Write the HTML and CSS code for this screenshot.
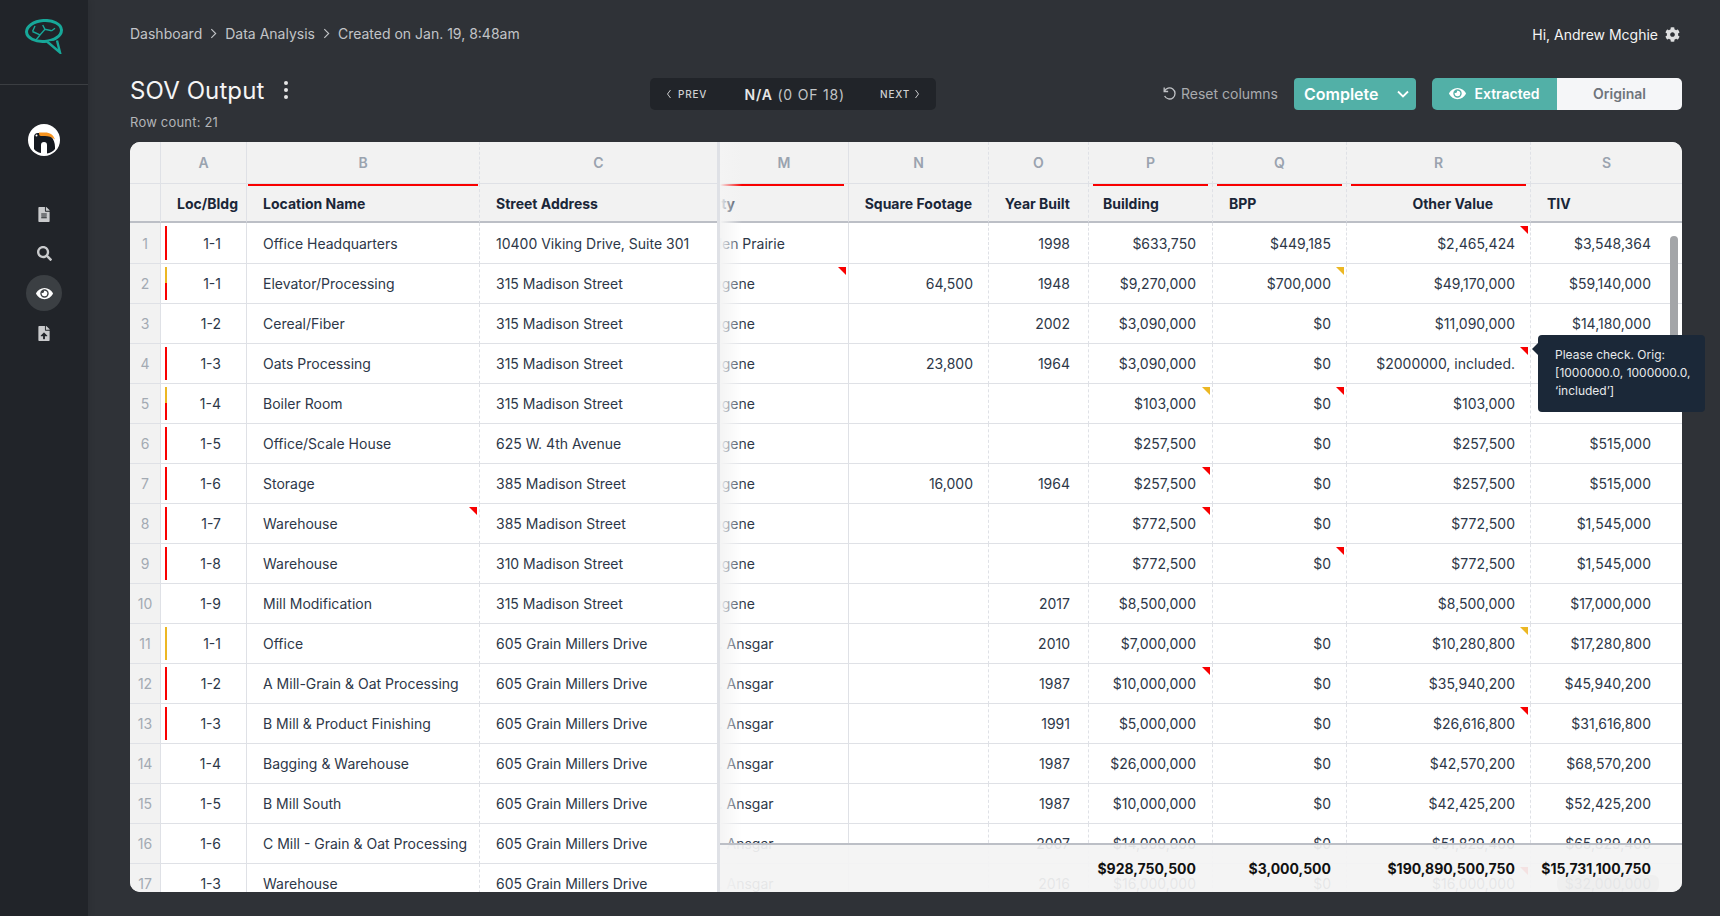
FILE: index.html
```html
<!DOCTYPE html>
<html lang="en">
<head>
<meta charset="utf-8">
<title>SOV Output</title>
<link rel="stylesheet" href="styles.css">
</head>
<body>
<aside class="sidebar">
  <div class="brand">
    <svg class="brand-logo" viewBox="0 0 39 35" fill="none" stroke="#17a899" aria-label="logo">
      <ellipse cx="19" cy="12" rx="17.500" ry="10.500" transform="rotate(-4 19 12)" stroke-width="3"/>
      <path d="M22 22.500L35 33.500 32 21.500" stroke-width="2.400" fill="#212429"/>
      <path d="M7.500 12.500L15 16l5-5.700 6.700 1.400M15 16l-4 5M20 10.300L17.700 6M26.700 11.700L30 9.300M7.500 12.500L10 7" stroke-width="1.400"/>
    </svg>
  </div>
  <nav class="side-nav">
    <svg class="toucan" viewBox="0 0 32 32" aria-label="account">
      <circle cx="16" cy="16" r="16" fill="#fff"/>
      <path d="M6 25V13c0-2.500 1.500-4 4-4h4c8 0 13 6 13 14v2c-2 2.500-5 4-8 4.500V21c0-2-1-3-3-3s-3 1-3 3v8c-3-.5-5.500-2-7-4z" fill="#14181f"/>
      <path d="M11 8.500h6c5 0 8.500 2.500 10 7-3-2.500-7-3.500-10-3.500h-4c-1.500 0-2-1-2-3.500z" fill="#f7931e"/>
      <circle cx="8.500" cy="11.500" r="1" fill="#fff"/>
    </svg>
    <svg class="side-icon icon-doc" viewBox="0 0 384 512"><path d="M224 136V0H24C10.700 0 0 10.700 0 24v464c0 13.300 10.700 24 24 24h336c13.300 0 24-10.700 24-24V160H248c-13.200 0-24-10.800-24-24zm64 236c0 6.600-5.400 12-12 12H108c-6.600 0-12-5.400-12-12v-8c0-6.600 5.400-12 12-12h168c6.600 0 12 5.400 12 12v8zm0-64c0 6.600-5.400 12-12 12H108c-6.600 0-12-5.400-12-12v-8c0-6.600 5.400-12 12-12h168c6.600 0 12 5.400 12 12v8zm0-72v8c0 6.600-5.400 12-12 12H108c-6.600 0-12-5.400-12-12v-8c0-6.600 5.400-12 12-12h168c6.600 0 12 5.400 12 12zm96-114.100v6.100H256V0h6.100c6.400 0 12.500 2.500 17 7l97.900 98c4.500 4.500 7 10.600 7 16.900z"/></svg>
    <svg class="side-icon icon-search" viewBox="0 0 512 512"><path d="M505 442.700L405.300 343c-4.500-4.500-10.600-7-17-7H372c27.600-35.300 44-79.700 44-128C416 93.100 322.900 0 208 0S0 93.100 0 208s93.100 208 208 208c48.300 0 92.700-16.400 128-44v16.300c0 6.400 2.500 12.500 7 17l99.700 99.700c9.400 9.400 24.600 9.400 33.900 0l28.300-28.300c9.400-9.400 9.400-24.600.1-34zM208 336c-70.700 0-128-57.200-128-128 0-70.700 57.200-128 128-128 70.700 0 128 57.200 128 128 0 70.700-57.200 128-128 128z"/></svg>
    <div class="side-active">
      <svg class="side-eye" viewBox="0 0 576 512"><path d="M572.520 241.400C518.290 135.590 410.930 64 288 64S57.680 135.640 3.480 241.410a32.350 32.350 0 0 0 0 29.190C57.710 376.410 165.070 448 288 448s230.320-71.640 284.520-177.410a32.350 32.350 0 0 0 0-29.190zM288 400a144 144 0 1 1 144-144 143.930 143.930 0 0 1-144 144zm0-240a95.310 95.310 0 0 0-25.310 3.790 47.850 47.850 0 0 1-66.900 66.900A95.780 95.780 0 1 0 288 160z"/></svg>
    </div>
    <svg class="side-icon icon-upload" viewBox="0 0 384 512"><path d="M224 136V0H24C10.700 0 0 10.700 0 24v464c0 13.300 10.700 24 24 24h336c13.300 0 24-10.700 24-24V160H248c-13.200 0-24-10.800-24-24zm65.180 216.010H224v80c0 8.840-7.160 16-16 16h-32c-8.840 0-16-7.160-16-16v-80H94.820c-14.280 0-21.410-17.290-11.270-27.360l96.420-95.700c6.650-6.610 17.390-6.610 24.040 0l96.420 95.700c10.150 10.070 3.030 27.360-11.250 27.360zM377 105L279.100 7c-4.500-4.500-10.600-7-17-7H256v128h128v-6.100c0-6.300-2.500-12.400-7-16.900z"/></svg>
  </nav>
</aside>

<main class="main">
  <header class="topbar">
    <nav class="crumbs">
      <span>Dashboard</span>
      <svg class="crumb-sep" viewBox="0 0 8 12"><path d="M1.500 1l5 5-5 5"/></svg>
      <span>Data Analysis</span>
      <svg class="crumb-sep" viewBox="0 0 8 12"><path d="M1.500 1l5 5-5 5"/></svg>
      <span>Created on Jan. 19, 8:48am</span>
    </nav>
    <div class="user">
      <span>Hi, Andrew Mcghie</span>
      <svg class="gear" viewBox="0 0 512 512"><path d="M487.400 315.700l-42.600-24.600c4.300-23.200 4.300-47 0-70.200l42.600-24.600c4.900-2.800 7.100-8.600 5.500-14-11.100-35.600-30-67.800-54.700-94.600-3.800-4.100-10-5.100-14.800-2.300L380.800 110c-17.900-15.400-38.500-27.300-60.800-35.100V25.800c0-5.600-3.900-10.500-9.400-11.700-36.700-8.200-74.300-7.800-109.200 0-5.500 1.200-9.400 6.100-9.400 11.700V75c-22.200 7.900-42.800 19.800-60.800 35.100L88.700 85.500c-4.900-2.800-11-1.900-14.800 2.300-24.700 26.700-43.600 58.900-54.700 94.600-1.700 5.400.6 11.200 5.500 14L67.300 221c-4.300 23.200-4.300 47 0 70.200l-42.600 24.600c-4.900 2.800-7.100 8.600-5.500 14 11.100 35.600 30 67.800 54.700 94.600 3.800 4.100 10 5.100 14.800 2.300l42.600-24.600c17.900 15.400 38.500 27.300 60.800 35.100v49.200c0 5.600 3.900 10.500 9.400 11.700 36.700 8.200 74.300 7.800 109.200 0 5.500-1.200 9.400-6.100 9.400-11.700v-49.200c22.200-7.900 42.800-19.800 60.800-35.100l42.600 24.600c4.900 2.800 11 1.900 14.800-2.300 24.700-26.700 43.600-58.900 54.700-94.600 1.500-5.500-.7-11.300-5.600-14.100zM256 336c-44.100 0-80-35.900-80-80s35.900-80 80-80 80 35.900 80 80-35.900 80-80 80z"/></svg>
    </div>
  </header>

  <section class="toolbar">
    <div class="title-block">
      <div class="title-line">
        <h1 class="title">SOV Output</h1>
        <span class="kebab"><i></i><i></i><i></i></span>
      </div>
      <div class="row-count">Row count: 21</div>
    </div>
    <div class="pager">
      <span class="pager-btn"><svg class="pager-chev" viewBox="0 0 6 10"><path d="M4.500 1l-3 4 3 4"/></svg>PREV</span>
      <span class="pager-label"><b>N/A</b> (0 OF 18)</span>
      <span class="pager-btn pager-next">NEXT<svg class="pager-chev" viewBox="0 0 6 10"><path d="M1.500 1l3 4-3 4"/></svg></span>
    </div>
    <div class="controls">
      <span class="reset">
        <svg class="reset-icon" viewBox="0 0 16 16"><path d="M2.500 1.800v4.500H7"/><path d="M2.800 6A6.300 6.300 0 1 1 3 11.500"/></svg>
        Reset columns
      </span>
      <span class="complete">Complete<svg class="complete-chev" viewBox="0 0 12 8"><path d="M1 1.500L6 6.500l5-5"/></svg></span>
      <div class="toggle">
        <span class="toggle-on"><svg class="toggle-eye" viewBox="0 0 576 512"><path d="M572.520 241.400C518.290 135.590 410.930 64 288 64S57.680 135.640 3.480 241.410a32.350 32.350 0 0 0 0 29.190C57.710 376.410 165.070 448 288 448s230.320-71.640 284.520-177.410a32.350 32.350 0 0 0 0-29.190zM288 400a144 144 0 1 1 144-144 143.930 143.930 0 0 1-144 144zm0-240a95.310 95.310 0 0 0-25.310 3.790 47.850 47.850 0 0 1-66.900 66.900A95.780 95.780 0 1 0 288 160z"/></svg>Extracted</span>
        <span class="toggle-off">Original</span>
      </div>
    </div>
  </section>

  <section class="sheet">
    <div class="frozen">
      <table class="grid grid-left">
        <colgroup><col class="w-num"><col class="w-a"><col class="w-b"><col class="w-c"></colgroup>
        <thead>
          <tr class="letters"><th></th><th>A</th><th>B</th><th>C</th></tr>
          <tr class="names"><th></th><th class="r tight">Loc/Bldg</th><th class="l flagged narrow">Location Name</th><th class="l">Street Address</th></tr>
        </thead>
        <tbody>
          <tr><td class="num">1</td><td class="loc"><i class="mark red"></i>1-1</td><td>Office Headquarters</td><td>10400 Viking Drive, Suite 301</td></tr>
          <tr><td class="num">2</td><td class="loc"><i class="mark both"></i>1-1</td><td>Elevator/Processing</td><td>315 Madison Street</td></tr>
          <tr><td class="num">3</td><td class="loc">1-2</td><td>Cereal/Fiber</td><td>315 Madison Street</td></tr>
          <tr><td class="num">4</td><td class="loc"><i class="mark red"></i>1-3</td><td>Oats Processing</td><td>315 Madison Street</td></tr>
          <tr><td class="num">5</td><td class="loc"><i class="mark both"></i>1-4</td><td>Boiler Room</td><td>315 Madison Street</td></tr>
          <tr><td class="num">6</td><td class="loc"><i class="mark red"></i>1-5</td><td>Office/Scale House</td><td>625 W. 4th Avenue</td></tr>
          <tr><td class="num">7</td><td class="loc"><i class="mark red"></i>1-6</td><td>Storage</td><td>385 Madison Street</td></tr>
          <tr><td class="num">8</td><td class="loc"><i class="mark red"></i>1-7</td><td class="tri-r">Warehouse</td><td>385 Madison Street</td></tr>
          <tr><td class="num">9</td><td class="loc"><i class="mark red"></i>1-8</td><td>Warehouse</td><td>310 Madison Street</td></tr>
          <tr><td class="num">10</td><td class="loc">1-9</td><td>Mill Modification</td><td>315 Madison Street</td></tr>
          <tr><td class="num">11</td><td class="loc"><i class="mark yellow"></i>1-1</td><td>Office</td><td>605 Grain Millers Drive</td></tr>
          <tr><td class="num">12</td><td class="loc"><i class="mark red"></i>1-2</td><td>A Mill-Grain &amp; Oat Processing</td><td>605 Grain Millers Drive</td></tr>
          <tr><td class="num">13</td><td class="loc"><i class="mark red"></i>1-3</td><td>B Mill &amp; Product Finishing</td><td>605 Grain Millers Drive</td></tr>
          <tr><td class="num">14</td><td class="loc">1-4</td><td>Bagging &amp; Warehouse</td><td>605 Grain Millers Drive</td></tr>
          <tr><td class="num">15</td><td class="loc">1-5</td><td>B Mill South</td><td>605 Grain Millers Drive</td></tr>
          <tr><td class="num">16</td><td class="loc">1-6</td><td>C Mill - Grain &amp; Oat Processing</td><td>605 Grain Millers Drive</td></tr>
          <tr><td class="num">17</td><td class="loc">1-3</td><td>Warehouse</td><td>605 Grain Millers Drive</td></tr>
        </tbody>
      </table>
    </div>
    <div class="scroller">
      <table class="grid grid-right">
        <colgroup><col class="w-m"><col class="w-n"><col class="w-o"><col class="w-p"><col class="w-q"><col class="w-r"><col class="w-s"></colgroup>
        <thead>
          <tr class="letters"><th class="letter-m">M</th><th>N</th><th>O</th><th>P</th><th>Q</th><th>R</th><th>S</th></tr>
          <tr class="names"><th class="l flagged city">City</th><th class="r">Square Footage</th><th class="r year">Year Built</th><th class="l flagged snug">Building</th><th class="l flagged">BPP</th><th class="r flagged wide-pad">Other Value</th><th class="l">TIV</th></tr>
        </thead>
        <tbody>
          <tr><td>Eden Prairie</td><td></td><td>1998</td><td>$633,750</td><td>$449,185</td><td class="tri-r">$2,465,424</td><td>$3,548,364</td></tr>
          <tr><td class="tri-r">Eugene</td><td>64,500</td><td>1948</td><td>$9,270,000</td><td class="tri-y">$700,000</td><td>$49,170,000</td><td>$59,140,000</td></tr>
          <tr><td>Eugene</td><td></td><td>2002</td><td>$3,090,000</td><td>$0</td><td>$11,090,000</td><td>$14,180,000</td></tr>
          <tr><td>Eugene</td><td>23,800</td><td>1964</td><td>$3,090,000</td><td>$0</td><td class="tri-r">$2000000, included.</td><td></td></tr>
          <tr><td>Eugene</td><td></td><td></td><td class="tri-y">$103,000</td><td class="tri-r">$0</td><td>$103,000</td><td></td></tr>
          <tr><td>Eugene</td><td></td><td></td><td>$257,500</td><td>$0</td><td>$257,500</td><td>$515,000</td></tr>
          <tr><td>Eugene</td><td>16,000</td><td>1964</td><td class="tri-r">$257,500</td><td>$0</td><td>$257,500</td><td>$515,000</td></tr>
          <tr><td>Eugene</td><td></td><td></td><td class="tri-r">$772,500</td><td>$0</td><td>$772,500</td><td>$1,545,000</td></tr>
          <tr><td>Eugene</td><td></td><td></td><td>$772,500</td><td class="tri-r">$0</td><td>$772,500</td><td>$1,545,000</td></tr>
          <tr><td>Eugene</td><td></td><td>2017</td><td>$8,500,000</td><td></td><td>$8,500,000</td><td>$17,000,000</td></tr>
          <tr><td>St. Ansgar</td><td></td><td>2010</td><td>$7,000,000</td><td>$0</td><td class="tri-y">$10,280,800</td><td>$17,280,800</td></tr>
          <tr><td>St. Ansgar</td><td></td><td>1987</td><td class="tri-r">$10,000,000</td><td>$0</td><td>$35,940,200</td><td>$45,940,200</td></tr>
          <tr><td>St. Ansgar</td><td></td><td>1991</td><td>$5,000,000</td><td>$0</td><td class="tri-r">$26,616,800</td><td>$31,616,800</td></tr>
          <tr><td>St. Ansgar</td><td></td><td>1987</td><td>$26,000,000</td><td>$0</td><td>$42,570,200</td><td>$68,570,200</td></tr>
          <tr><td>St. Ansgar</td><td></td><td>1987</td><td>$10,000,000</td><td>$0</td><td>$42,425,200</td><td>$52,425,200</td></tr>
          <tr><td>St. Ansgar</td><td></td><td>2007</td><td>$14,000,000</td><td>$0</td><td>$51,829,400</td><td>$65,829,400</td></tr>
          <tr><td>St. Ansgar</td><td></td><td>2016</td><td>$16,000,000</td><td>$0</td><td class="tri-r">$16,000,000</td><td><span class="hbar">$32,000,000</span></td></tr>
        </tbody>
      </table>
      <div class="fade"></div>
      <div class="vbar"></div>
      <div class="totals">
        <span class="t-p">$928,750,500</span>
        <span class="t-q">$3,000,500</span>
        <span class="t-r">$190,890,500,750</span>
        <span class="t-s">$15,731,100,750</span>
      </div>
    </div>
  </section>

  <div class="tooltip">Please check. Orig: [1000000.0, 1000000.0, ‘included’]</div>
</main>
</body>
</html>
```

FILE: styles.css
```css
* { box-sizing: border-box; }
html, body { height: 100%; }
body {
  margin: 0;
  display: flex;
  height: 100vh;
  overflow: hidden;
  background: #2f3237;
  font-family: Inter, "Liberation Sans", sans-serif;
  font-size: 14px;
  color: #2d3748;
}

/* sidebar */
.sidebar { width: 88px; flex: none; background: #212429; box-shadow: 2px 0 6px rgba(0,0,0,.08); }
.brand { height: 85px; border-bottom: 1px solid #3b3e42; padding: 19px 0 0 25px; }
.brand-logo { display: block; width: 39px; height: 35px; }
.side-nav { display: flex; flex-direction: column; align-items: center; padding-top: 39px; }
.toucan { width: 32px; height: 32px; display: block; margin-bottom: 51px; }
.side-icon { display: block; fill: #c9cacc; }
.icon-doc { width: 12px; height: 15px; margin-bottom: 24px; }
.icon-search { width: 15px; height: 15px; margin-bottom: 14px; }
.side-active { width: 36px; height: 36px; border-radius: 50%; background: #3b3f43; display: flex; align-items: center; justify-content: center; margin-bottom: 15px; }
.side-eye { width: 17px; height: 15px; fill: #fff; }
.icon-upload { width: 12px; height: 15px; }

/* main */
.main { flex: 1; min-width: 0; display: flex; flex-direction: column; padding: 0 38px 24px 42px; position: relative; }
.topbar { height: 68px; flex: none; display: flex; align-items: center; justify-content: space-between; }
.crumbs { display: flex; align-items: center; gap: 8px; color: #c2c4c7; font-size: 14px; margin-top: -2px; }
.crumb-sep { width: 7px; height: 11px; fill: none; stroke: #c2c4c7; stroke-width: 1.300; }
.user { display: flex; align-items: center; gap: 7px; color: #f4f4f4; font-size: 14px; margin-right: 2px; }
.gear { width: 15px; height: 15px; fill: #dedfe0; }

.toolbar { height: 74px; flex: none; padding-top: 10px; display: flex; align-items: flex-start; }
.title-block { width: 520px; flex: none; }
.title-line { display: flex; align-items: center; height: 32px; margin-top: -4px; }
.title { margin: 0; font-size: 24px; font-weight: 400; color: #f5f5f5; letter-spacing: .1px; }
.kebab { display: flex; flex-direction: column; gap: 3px; margin-left: 20px; }
.kebab i { width: 4px; height: 4px; border-radius: 50%; background: #e6e6e6; display: block; }
.row-count { margin-top: 7px; font-size: 13px; line-height: 18px; color: #b3b5b8; letter-spacing: .2px; }

.pager { width: 286px; height: 32px; flex: none; background: #212429; border-radius: 5px; display: flex; align-items: center; justify-content: space-between; padding: 0 16px; color: #d0d1d3; }
.pager-btn { display: flex; align-items: center; gap: 6px; font-size: 10px; font-weight: 500; letter-spacing: .8px; }
.pager-next { gap: 4px; }
.pager-chev { width: 6px; height: 10px; fill: none; stroke: #c9cacc; stroke-width: 1; }
.pager-label { font-size: 14px; letter-spacing: .8px; color: #c2c4c7; margin-left: 2px; }
.pager-label b { font-weight: 600; color: #e6e6e6; }

.controls { margin-left: auto; display: flex; align-items: center; height: 32px; }
.reset { display: flex; align-items: center; gap: 5px; color: #a9abae; font-size: 14px; margin-right: 16px; padding-bottom: 2px; }
.reset-icon { width: 14px; height: 14px; fill: none; stroke: #c2c4c7; stroke-width: 1.500; }
.complete { width: 122px; height: 32px; background: #52b0a7; border-radius: 4px; color: #fff; font-size: 16px; font-weight: 600; display: flex; align-items: center; padding: 0 7px 1px 10px; justify-content: space-between; margin-right: 16px; }
.complete-chev { width: 12px; height: 8px; fill: none; stroke: #fff; stroke-width: 1.800; }
.toggle { width: 250px; height: 32px; display: flex; border-radius: 5px; overflow: hidden; font-weight: 600; font-size: 14px; }
.toggle-on { width: 125px; background: #52b0a7; color: #fff; display: flex; align-items: center; justify-content: center; gap: 8px; padding-bottom: 1px; }
.toggle-eye { width: 17px; height: 15px; fill: #fff; }
.toggle-off { flex: 1; background: #f5f6f8; color: #6f747b; display: flex; align-items: center; justify-content: center; padding-bottom: 1px; }

/* sheet */
.sheet { flex: 1; min-height: 0; display: flex; background: #fff; border-radius: 10px; overflow: hidden; }
.frozen { width: 590px; flex: none; border-right: 3px solid #dfe1e6; overflow: hidden; }
.scroller { flex: 1; min-width: 0; overflow: hidden; position: relative; }
.grid { border-collapse: separate; border-spacing: 0; table-layout: fixed; }
.grid-left { width: 587px; }
.grid-right { width: 993px; margin-left: -31px; }
.w-num { width: 31px; } .w-a { width: 86px; } .w-b { width: 233px; } .w-c { width: 237px; }
.w-m { width: 160px; } .w-n { width: 140px; } .w-o { width: 100px; } .w-p { width: 124px; } .w-q { width: 134px; } .w-r { width: 184px; } .w-s { width: 151px; }

.grid th { background: #f2f2f2; position: relative; padding: 0; }
.letters th { height: 42px; color: #9aa3af; font-weight: 600; font-size: 14px; text-align: center; border-bottom: 1px solid #dfe1e6; }
.letter-m { padding-left: 31px !important; }
.names th { height: 39px; color: #1a2638; font-weight: 700; font-size: 14px; border-bottom: 2px solid #bcbfc6; white-space: nowrap; padding-top: 1px; }
.names th.l { text-align: left; padding-left: 16px; }
.names th.r { text-align: right; padding-right: 16px; }
.names th.year { padding-right: 18px; }
.names th.city { padding-left: 18px; }
.names th.snug { padding-left: 14px; }
.names th.tight { padding-right: 8px; }
.names th.wide-pad { padding-right: 37px; }
.flagged::before { content: ""; position: absolute; left: 4px; right: 4px; top: 0; height: 2px; background: #f90000; }
.flagged.narrow::before { left: 1px; right: 1px; }

.grid td { height: 40px; padding: 0 16px; border-bottom: 1px solid #dfe1e6; white-space: nowrap; position: relative; color: #2d3748; font-size: 14px; }
.grid tbody tr:first-child td { height: 41px; }
.grid-right td { text-align: right; }
.grid-right td:first-child { text-align: left; }
.grid-right td:nth-child(2) { padding-right: 15px; }
.grid-right td:nth-child(3) { padding-right: 18px; }
.grid-right td:nth-child(4) { padding-right: 16px; }
.grid-right td:nth-child(5) { padding-right: 15px; }
.grid-right td:nth-child(6) { padding-right: 15px; }
.grid-right td:last-child { padding-right: 31px; }

/* column rules */
.grid-left tr > :nth-child(1), .grid-left tr > :nth-child(2), .grid-right tr > :nth-child(1) { border-right: 1px solid #dfe1e6; }
.grid-left tr > :nth-child(3),
.grid-right tr > :nth-child(2), .grid-right tr > :nth-child(3), .grid-right tr > :nth-child(4), .grid-right tr > :nth-child(5), .grid-right tr > :nth-child(6) { border-right: 1px dashed #dfe1e6; }

.grid td.num { background: #f2f2f2; color: #a3aab3; text-align: center; padding: 0; }
.grid td.loc { text-align: right; padding-right: 25px; }
.mark { position: absolute; left: 4px; top: 3px; bottom: 3px; width: 2px; }
.mark.red { background: #f90000; }
.mark.yellow { background: #ecb723; }
.mark.both { background: linear-gradient(#ecb723 50%, #f90000 50%); }
.tri-r::after, .tri-y::after { content: ""; position: absolute; top: 3px; right: 2px; border-style: solid; border-width: 0 8px 8px 0; }
.tri-r::after { border-color: transparent #f90000 transparent transparent; }
.tri-y::after { border-color: transparent #ecb723 transparent transparent; }
.hbar { background: #b8b8b8; border-radius: 6px; padding: 0 8px; margin-right: -8px; }

.fade { position: absolute; left: 0; top: 0; bottom: 0; width: 22px; background: linear-gradient(90deg, #f4f4f4, rgba(255,255,255,0)); }
.vbar { position: absolute; right: 4px; top: 94px; width: 8px; height: 170px; background: #a3a5a8; border-radius: 4px; }
.totals { position: absolute; left: 0; right: 0; bottom: 0; height: 49px; background: rgba(243,243,243,.93); border-top: 2px solid #bcbfc6; display: grid; grid-template-columns: 493px 134px 184px 151px; justify-items: end; align-items: center; color: #111; font-weight: 650; font-size: 14px; }
.t-p { padding-right: 17px; } .t-q { padding-right: 16px; } .t-r { padding-right: 16px; } .t-s { padding-right: 31px; }

.tooltip { position: absolute; left: 1450px; top: 335px; width: 167px; height: 77px; background: #1b2838; color: #e8eaec; font-size: 12px; line-height: 18px; padding: 11px 14px 0 17px; border-radius: 4px; }
.tooltip::before { content: ""; position: absolute; left: -6px; top: 8px; border-style: solid; border-width: 6px 6px 6px 0; border-color: transparent #1b2838 transparent transparent; }
```
